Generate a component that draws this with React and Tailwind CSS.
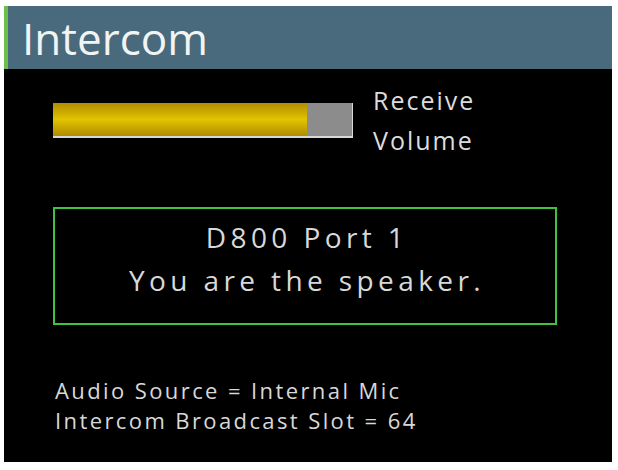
import React from 'react';

// Intercom status screen: header, receive volume meter, speaker box and source details
const VolumeMeter = ({ level = 85 }) => (
  <div className="flex h-[35px] w-[300px] bg-[#8c8c8c] border-b-2 border-r border-[#d8d8d8]">
    <div
      className="h-full bg-gradient-to-b from-[#b08c00] via-[#e2c400] to-[#b08c00]"
      style={{ width: `${level}%` }}
    />
  </div>
);

const App = () => {
  return (
    <div className="w-[618px] h-[470px] bg-white pt-[6px] pl-[4px]" style={{ fontFamily: '"Open Sans", "Noto Sans", sans-serif' }}>
      <div className="w-[608px] h-[456px] bg-black flex flex-col">
        <div className="h-[63px] bg-[#486a7c] border-l-4 border-[#6cc04a] flex items-center pl-[14px]">
          <span className="text-[44px] text-[#f2f4f4] leading-none">Intercom</span>
        </div>

        <div className="flex items-center pl-[49px] mt-[11px] gap-[20px]">
          <VolumeMeter level={85} />
          <div className="text-[25px] leading-[40px] tracking-[2px] text-[#dcdcdc]">
            <div>Receive</div>
            <div>Volume</div>
          </div>
        </div>

        <div className="ml-[49px] mt-[47px] w-[504px] h-[118px] pb-[14px] border-2 border-[#3fc43f] flex flex-col items-center justify-center text-[28px] leading-[43px] tracking-[4.4px] text-[#d8d8d8]">
          <div className="pl-[4px]">D800 Port 1</div>
          <div className="pl-[4px]">You are the speaker.</div>
        </div>

        <div className="ml-[51px] mt-[50px] text-[22px] leading-[30px] tracking-[2.4px] text-[#d8d8d8]">
          <div>Audio Source = Internal Mic</div>
          <div>Intercom Broadcast Slot = 64</div>
        </div>
      </div>
    </div>
  );
};

export default App;
